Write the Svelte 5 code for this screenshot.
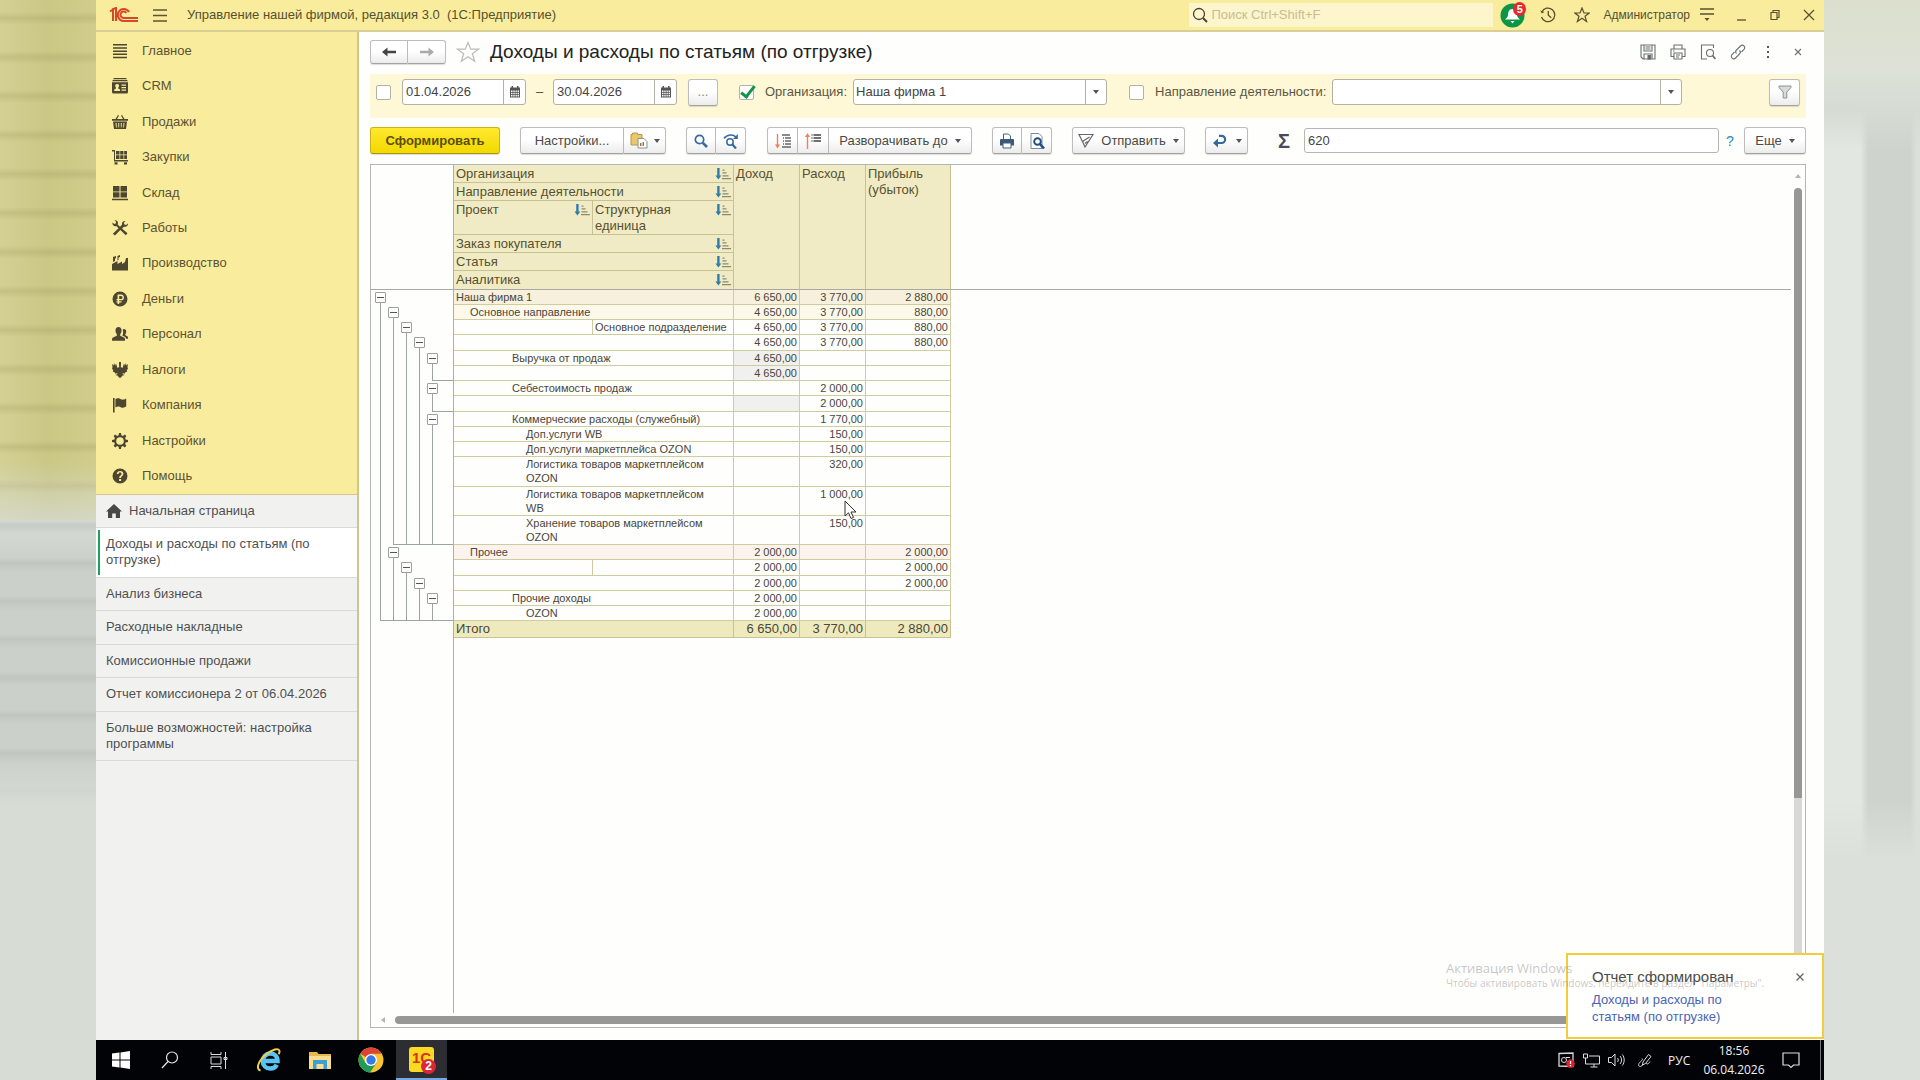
<script lang="ts">
  type Row = {
    name?: string;
    sub?: string;
    split?: boolean;
    level?: number;
    tree: string;
    end?: number;
    values: [string, string, string];
    tone?: string;
    muted?: boolean;
  };

  // Sidebar section icons, drawn on a 16x16 grid with even-odd fill
  const sections = [
    { title: 'Главное', d: 'M1 1h14v1.5H1zM1 4.2h14v1.5H1zM1 7.4h14v1.5H1zM1 10.6h14v1.5H1zM1 13.8h14v1.5H1z' },
    { title: 'CRM', d: 'M2 0h12l1 1.2H1zM1 2h14l1 1.2H0zM0 4.2h16V14a1.5 1.5 0 0 1-1.500 1.500h-13A1.500 1.500 0 0 1 0 14zM5 6a1.800 1.800 0 0 0-1.200 3.200L4 10.500l-1.800 1V13H8v-1.500l-1.800-1 .2-1.300A1.800 1.800 0 0 0 5 6zM9.500 6.500v1.200H14V6.500zM9.500 9v1.200H14V9zM9.500 11.500v1.200H14v-1.200z' },
    { title: 'Продажи', d: 'M3.500 5L6 1l1 .6L5 5h6L9 1.600 10 1l2.500 4H16v1.800H0V5zM1 7.600h14L14 15H2zM3.500 9l.5 4.500h.8L4.500 9zM6.200 9l.2 4.500h.8V9zM8.800 9v4.500h.8L9.800 9zM11.500 9l-.3 4.500h.8l.5-4.500z' },
    { title: 'Закупки', d: 'M0 1h3v10h13v1.500H2V2.500H0zM4 2h3.500v3.500H4zM8.200 2h3.300v3.500H8.200zM12.200 2H15v3.500h-2.800zM4 6.200h3.500V10H4zM8.200 6.200h3.300V10H8.200zM12.200 6.200H15V10h-2.800zM2.500 13.200h3V15.500h-3zM12 13.200h3V15.500h-3z' },
    { title: 'Склад', d: 'M1 1h6.500v5.500H1zM8.500 1H15v5.500H8.500zM1 7.300h6.500v5.200H1zM8.500 7.300H15v5.200H8.500zM0 13.800h16v1.500H0z' },
    { title: 'Работы', d: 'M.5 2.500L2.300 4 4 3.300 3.800 1.200 2.500.5C4 0 6 .8 6 3l-.3 1.500L8 6.700l2-2C9.700 2 11.500.5 13.500 1l-1.700 1.700.6 1.800 1.800.5L15.800 3.400C16.500 5.500 14.500 7.200 12 6.800L10 8.500l5.500 4.800-1.700 2L8.300 10 3 15.500.8 13.700 6.500 8.300 4.300 6C2 6.800 0 5 .5 2.500z' },
    { title: 'Производство', d: 'M0 15.500V9l5.500-3v3L10 6.500V9l3-2 1-4h2v12.500zM1 2l3-1v2.200l-1 .3V6L1 7zM5.500 1L8 0v2l-1.500.5V5l-1 .5z' },
    { title: 'Деньги', d: 'M8 .5a7.500 7.500 0 1 0 0 15 7.500 7.500 0 0 0 0-15zM5.500 3.500H9a2.800 2.800 0 0 1 0 5.800H7.200v.9h2.300v1.200H7.200V13H5.600v-1.600H4.500v-1.200h1.100v-.9H4.500V8h1.100zM7.200 4.900V8H9a1.500 1.500 0 0 0 0-3.100z' },
    { title: 'Персонал', d: 'M6.500 1C8.500 1 9.500 2.300 9.500 4.500c0 1.800-.6 2.800-1.300 3.600v1.700l3.800 1.700c.8.400 1 1 1 3.300H0c0-2.300.2-2.900 1-3.300l3.800-1.700V8.100C4.100 7.300 3.500 6.300 3.500 4.500 3.500 2.300 4.500 1 6.500 1zM11.800 3c1.600 0 2.400 1 2.400 2.700 0 1.200-.4 2-.9 2.500v1l2 1c.6.300.7.800.7 2.600h-2l-.6-1.700-3-1.400c.8-2 1-4 .3-6.300z' },
    { title: 'Налоги', d: 'M7 0h2v2.500L8.800 5l1.700 1L12 1.500l.8 2L14 1l.3 2.500L16 2l-.5 3L16 6.500l-1.200 1.700.4 1.300-1.700.7-1 1.500-2-.8.3 1 1.700 1.300-2 .3L9.500 15 8 16l-1.500-1-1-1.500-2-.3 1.700-1.300.3-1-2 .8-1-1.500-1.700-.7.4-1.300L0 6.500.5 5 0 2l1.700 1.500L2 1l1.200 2.500.8-2L5.500 6l1.700-1L7 2.500z' },
    { title: 'Компания', d: 'M1 1h1.600v14.500H1zM3.400 2C6 .5 7.500 1.500 9 2.300c1.700.9 3 .5 5.200-.7v8C12 11 10.500 11 8.800 10.200 7.300 9.400 6 9 3.400 10.500z' },
    { title: 'Настройки', d: 'M7 0h2l.4 2.300 1.500.6L12.800 1.500l1.600 1.600-1.300 1.900.6 1.500L16 7v2l-2.300.4-.6 1.500 1.300 1.900-1.600 1.600-1.900-1.300-1.500.6L9 16H7l-.4-2.300-1.500-.6-1.900 1.300-1.600-1.600 1.300-1.900-.6-1.500L0 9V7l2.300-.4.6-1.500L1.600 3.100l1.600-1.600 1.900 1.400 1.500-.6zM8 4.200a3.800 3.800 0 1 0 0 7.600 3.800 3.800 0 0 0 0-7.600z' },
    { title: 'Помощь', d: 'M8 .5a7.500 7.500 0 1 0 0 15 7.500 7.500 0 0 0 0-15zM4.800 6C4.800 4 6.200 3 8.100 3c2 0 3.300 1.100 3.300 2.800 0 2.200-2.400 2.300-2.400 4.200H7.200c0-2.500 2.300-2.700 2.300-4.100 0-.8-.6-1.300-1.400-1.300-.9 0-1.500.5-1.500 1.400zM7.100 11h2v2h-2z' },
  ];

  const tabs = [
    'Доходы и расходы по статьям (по отгрузке)',
    'Анализ бизнеса',
    'Расходные накладные',
    'Комиссионные продажи',
    'Отчет комиссионера 2 от 06.04.2026',
    'Больше возможностей: настройка программы',
  ];

  // tree: one character per outline level, "l" = running line, "b" = collapse button
  const rows: Row[] = [
    { name: 'Наша фирма 1', level: 0, tree: 'b', values: ['6 650,00', '3 770,00', '2 880,00'], tone: 'sand' },
    { name: 'Основное направление', level: 1, tree: 'lb', values: ['4 650,00', '3 770,00', '880,00'], tone: 'cream' },
    { split: true, sub: 'Основное подразделение', tree: 'llb', values: ['4 650,00', '3 770,00', '880,00'] },
    { tree: 'lllb', values: ['4 650,00', '3 770,00', '880,00'] },
    { name: 'Выручка от продаж', level: 2, tree: 'llllb', values: ['4 650,00', '', ''], muted: true },
    { tree: 'lllll', end: 5, values: ['4 650,00', '', ''], muted: true },
    { name: 'Себестоимость продаж', level: 2, tree: 'llllb', values: ['', '2 000,00', ''] },
    { tree: 'lllll', end: 5, values: ['', '2 000,00', ''], muted: true },
    { name: 'Коммерческие расходы (служебный)', level: 2, tree: 'llllb', values: ['', '1 770,00', ''] },
    { name: 'Доп.услуги WB', level: 3, tree: 'lllll', values: ['', '150,00', ''] },
    { name: 'Доп.услуги маркетплейса OZON', level: 3, tree: 'lllll', values: ['', '150,00', ''] },
    { name: 'Логистика товаров маркетплейсом OZON', level: 3, tree: 'lllll', values: ['', '320,00', ''], tone: 'tall' },
    { name: 'Логистика товаров маркетплейсом WB', level: 3, tree: 'lllll', values: ['', '1 000,00', ''], tone: 'tall' },
    { name: 'Хранение товаров маркетплейсом OZON', level: 3, tree: 'lllll', end: 2, values: ['', '150,00', ''], tone: 'tall' },
    { name: 'Прочее', level: 1, tree: 'lb', values: ['2 000,00', '', '2 000,00'], tone: 'rose' },
    { split: true, tree: 'llb', values: ['2 000,00', '', '2 000,00'] },
    { tree: 'lllb', values: ['2 000,00', '', '2 000,00'] },
    { name: 'Прочие доходы', level: 2, tree: 'llllb', values: ['2 000,00', '', ''] },
    { name: 'OZON', level: 3, tree: 'lllll', end: 1, values: ['2 000,00', '', ''] },
  ];

  let search = $state('');
  let dateFrom = $state('01.04.2026');
  let dateTo = $state('30.04.2026');
  let usePeriod = $state(false);
  let useOrg = $state(true);
  let useDirection = $state(false);
  let sum = $state('620');
</script>

{#snippet caret()}
  <svg class="caret" viewBox="0 0 6 4" aria-hidden="true"><path d="M0 0h6L3 4z" /></svg>
{/snippet}

{#snippet calendar()}
  <svg class="cal" viewBox="0 0 12 12" aria-hidden="true">
    <path fill-rule="evenodd" d="M1 1.500h1.500V0H4v1.500h4V0h1.500v1.500H11V11.500H1zM2 4.500v1.500h1.500V4.500zM4.300 4.500v1.500h1.400V4.500zM6.500 4.500v1.500h1.300V4.500zM8.600 4.500v1.500H10V4.500zM2 6.800v1.400h1.500V6.800zM4.300 6.800v1.400h1.400V6.800zM6.500 6.800v1.400h1.300V6.800zM8.600 6.800v1.400H10V6.800zM2 9v1.500h1.500V9zM4.300 9v1.500h1.400V9zM6.500 9v1.500h1.300V9zM8.600 9v1.500H10V9z" />
  </svg>
{/snippet}

{#snippet sort()}
  <svg class="sort" viewBox="0 0 16 12" aria-hidden="true">
    <path fill="#2f7dac" d="M2.200 0h2.400v7.500h1.700L3.400 11.500.5 7.500h1.700z" />
    <path fill="#8d8b6c" d="M7.500 1.500h2v1.200h-2zM7.500 4.300h4v1.200h-4zM7.500 7.200h6v1.200h-6zM7 10h9v1.200H7z" />
  </svg>
{/snippet}

<div class="screen">
  <div class="blur left"></div>

  <div class="desktop">
    <header class="titlebar">
      <svg class="logo" viewBox="0 0 30 16" aria-label="1C" role="img">
        <g fill="none" stroke="#d9472b" stroke-width="2">
          <path d="M1 4.500L4 2.500V14M3 2.500L7 1v13" />
          <path d="M20 5A6 6 0 1 0 14.500 14H29" />
          <path d="M17.300 6A3.200 3.200 0 1 0 14.500 11H29" />
        </g>
      </svg>
      <button class="plain burger" aria-label="Меню">
        <svg viewBox="0 0 14 13"><path d="M0 1h14M0 6.500h14M0 12h14" stroke="#5d5433" stroke-width="1.300" /></svg>
      </button>
      <span class="apptitle">Управление нашей фирмой, редакция 3.0&nbsp; (1С:Предприятие)</span>
      <label class="search">
        <svg viewBox="0 0 16 16" fill="none" stroke="#4a4330" stroke-width="1.300"><circle cx="7" cy="7" r="5.500" /><path d="M11 11l4 4" stroke-width="2" /></svg>
        <input type="text" placeholder="Поиск Ctrl+Shift+F" aria-label="Поиск" bind:value={search} />
      </label>
      <button class="plain bell" aria-label="Уведомления">
        <svg viewBox="0 0 26 26">
          <circle cx="12.500" cy="13.500" r="12" fill="#0c9547" />
          <path fill="#fff" d="M12.500 7c3.500 0 4.300 3 4.500 6 .1 2 1.500 3 3 4.500H5C6.500 16 7.900 15 8 13c.2-3 1-6 4.500-6zM10.500 19h4l-2 2.500z" />
        </svg>
        <span class="badge">5</span>
      </button>
      <button class="plain" aria-label="История">
        <svg viewBox="0 0 16 16" fill="none" stroke="#57502f" stroke-width="1.300"><path d="M1.800 5A6.800 6.800 0 1 1 1.500 10M8.300 4v4.300l3 2.500" /><path d="M.3 3.500l1.500 3L4.500 5z" fill="#57502f" stroke="none" /></svg>
      </button>
      <button class="plain star" aria-label="Избранное">
        <svg viewBox="0 0 16 16" fill="none" stroke="#57502f" stroke-width="1.200"><path d="M8 1l2 5h5.200L11 9.200l1.600 5.300L8 11.300l-4.600 3.200L5 9.200.8 6H6z" /></svg>
      </button>
      <button class="plain user">Администратор</button>
      <button class="plain" aria-label="Сервис">
        <svg viewBox="0 0 16 16"><path d="M1 2h14M1 7h14" stroke="#57502f" stroke-width="1.300" /><path d="M5.500 11h5L8 14z" fill="#57502f" /></svg>
      </button>
      <div class="winctl">
        <button class="plain" aria-label="Свернуть"><svg viewBox="0 0 16 16"><path d="M4 13h9" stroke="#57502f" stroke-width="1.300" /></svg></button>
        <button class="plain" aria-label="Восстановить"><svg viewBox="0 0 16 16" fill="none" stroke="#57502f" stroke-width="1.200"><path d="M4 5.500h6v7H4zM6 5.500v-2h6v7h-2" /></svg></button>
        <button class="plain" aria-label="Закрыть"><svg viewBox="0 0 16 16"><path d="M3 3l10 10M13 3L3 13" stroke="#57502f" stroke-width="1.200" /></svg></button>
      </div>
    </header>

    <div class="body">
      <aside class="sidebar">
        <nav class="sections">
          {#each sections as s}
            <a href="#section">
              <svg viewBox="0 0 16 16" aria-hidden="true"><path fill-rule="evenodd" d={s.d} /></svg>
              {s.title}
            </a>
          {/each}
        </nav>
        <nav class="tabs">
          <a class="home" href="#home">
            <svg viewBox="0 0 16 14" aria-hidden="true"><path d="M8 0l8 7.500h-2V14H9.800V9.500H6.200V14H2V7.500H0z" /></svg>
            Начальная страница
          </a>
          {#each tabs as t, i}
            <a href="#tab" class:active={i === 0}>{t}</a>
          {/each}
        </nav>
      </aside>

      <main>
        <div class="heading">
          <div class="group nav">
            <button aria-label="Назад"><svg viewBox="0 0 14 10"><path fill="#444" d="M0 5l5.500-4.500v3.300H14v2.400H5.500v3.300z" /></svg></button>
            <button aria-label="Вперед"><svg viewBox="0 0 14 10"><path fill="#aaa" d="M14 5L8.500.5v3.300H0v2.400h8.500v3.300z" /></svg></button>
          </div>
          <button class="plain fav" aria-label="В избранное">
            <svg viewBox="0 0 24 22" fill="none" stroke="#b9bcbd" stroke-width="1.200"><path d="M12 1.500l2.800 6.700h7.700l-6.200 4.600 2.400 7.400L12 15.700l-6.700 4.500 2.400-7.400L1.500 8.200h7.700z" /></svg>
          </button>
          <h1>Доходы и расходы по статьям (по отгрузке)</h1>
          <div class="tools">
            <button class="plain" aria-label="Сохранить"><svg viewBox="0 0 16 16"><path d="M1 1h14v14H3l-2-2zM4 1v6h8V1M5.500 3h5M5.500 5h5M4 15v-5h8v5" /><path d="M8 11.500h2.500V15H8z" fill="#666" /></svg></button>
            <button class="plain" aria-label="Печать"><svg viewBox="0 0 16 16"><path d="M4 5V1h8v4M3.500 12.500H1V5h14v7.500h-2.500M4 9h8v6H4zM6 11h4M6 13h3M3 7h1.500" /></svg></button>
            <button class="plain" aria-label="Просмотр"><svg viewBox="0 0 16 16"><path d="M13.500 4V1h-12v14H7" /><circle cx="10" cy="9" r="3.500" /><path d="M12.500 11.500L15.500 15" stroke-width="1.800" /></svg></button>
            <button class="plain" aria-label="Ссылка"><svg viewBox="0 0 16 16"><path d="M6.500 9.500c-1-1-1-2.500 0-3.500L10.500 2c2.500-2.200 5.500 1 3.500 3.500L11.500 8M9.500 6.500c1 1 1 2.500 0 3.500L5.500 14C3 16.200 0 13 2 10.500L4.500 8" /></svg></button>
            <button class="plain" aria-label="Еще действия"><svg viewBox="0 0 16 16"><path d="M7 2h2v2H7zM7 7h2v2H7zM7 12h2v2H7z" fill="#555" stroke="none" /></svg></button>
            <button class="plain" aria-label="Закрыть отчет"><svg viewBox="0 0 16 16"><path d="M5 5l6 6M11 5l-6 6" /></svg></button>
          </div>
        </div>

        <div class="filter">
          <input type="checkbox" aria-label="Период" bind:checked={usePeriod} />
          <div class="field date first">
            <input type="text" aria-label="Начало периода" bind:value={dateFrom} />
            <button aria-label="Выбрать дату начала">{@render calendar()}</button>
          </div>
          <span class="dash">–</span>
          <div class="field date">
            <input type="text" aria-label="Конец периода" bind:value={dateTo} />
            <button aria-label="Выбрать дату окончания">{@render calendar()}</button>
          </div>
          <button class="btn dots" aria-label="Выбрать период">...</button>
          <input id="use-org" type="checkbox" aria-label="Отбор по организации" bind:checked={useOrg} />
          <label for="org">Организация:</label>
          <div class="field org">
            <select id="org"><option>Наша фирма 1</option></select>
            <span class="drop">{@render caret()}</span>
          </div>
          <input id="use-dir" type="checkbox" aria-label="Отбор по направлению" bind:checked={useDirection} />
          <label for="direction">Направление деятельности:</label>
          <div class="field direction">
            <select id="direction"><option></option></select>
            <span class="drop">{@render caret()}</span>
          </div>
          <button class="btn funnel" aria-label="Отбор">
            <svg viewBox="0 0 14 14"><path fill="#d8dadb" stroke="#8c9092" d="M1 1h12v1.500L8.800 7v6H5.200V7L1 2.500z" /></svg>
          </button>
        </div>

        <div class="toolbar">
          <button class="btn primary">Сформировать</button>
          <div class="group settings">
            <button>Настройки...</button>
            <button class="variant" aria-label="Варианты отчета">
              <svg viewBox="0 0 18 17">
                <path fill="#e9c76b" stroke="#b9974a" d="M1 2.500h1.500V1h5v1.500H12V13H1z" />
                <path fill="#fff" stroke="#8b9196" d="M8 6.500h6l3 3V16H8z" />
                <path fill="#d05a4e" d="M10 11h1.500v3H10z" /><path fill="#4f9b5d" d="M12.500 10H14v4h-1.500z" />
              </svg>
              {@render caret()}
            </button>
          </div>
          <div class="group find">
            <button aria-label="Найти"><svg viewBox="0 0 16 16" fill="none" stroke="#35699c"><circle cx="6.500" cy="6.500" r="4.200" stroke-width="1.700" /><path d="M9.800 9.800L14 14" stroke-width="2.600" /></svg></button>
            <button aria-label="Найти далее"><svg viewBox="0 0 16 16" fill="none" stroke="#35699c"><circle cx="7" cy="9" r="3.200" stroke-width="1.500" /><path d="M9.500 11.500l3.500 4" stroke-width="2.200" /><path d="M1 5.500C4 1 10 1 13 4" stroke-width="1.500" /><path d="M14.800 1v5H10z" fill="#35699c" stroke="none" /></svg></button>
          </div>
          <div class="group expand">
            <button aria-label="Развернуть"><svg viewBox="0 0 18 16"><path d="M3.500 1v12" stroke="#ef7f5d" stroke-width="1.400" /><path d="M1 11.500h5l-2.500 4z" fill="#ef7f5d" /><path d="M8 2h8M11 5h6M11 8h6M11 11h6M8 14h9M9 5h1M9 8h1M9 11h1" stroke="#666" stroke-width="1.300" /></svg></button>
            <button aria-label="Свернуть группы"><svg viewBox="0 0 18 16"><path d="M3.500 3v13" stroke="#ef7f5d" stroke-width="1.400" /><path d="M1 4h5L3.500 0z" fill="#ef7f5d" /><path d="M9.500 2H17M9.500 5H17M9.500 8H17M7.500 2h1M7.500 5h1M7.500 8h1" stroke="#444" stroke-width="1.300" /></svg></button>
            <button class="wide">Разворачивать до {@render caret()}</button>
          </div>
          <div class="group print">
            <button aria-label="Печать отчета"><svg viewBox="0 0 16 16"><path fill="#fff" stroke="#44617d" d="M4.500 6V1h5l2 2v3" /><path fill="#3a5a7a" d="M2 6h12a1 1 0 0 1 1 1v5.500H1V7a1 1 0 0 1 1-1z" /><path fill="#fff" stroke="#44617d" d="M4 10h8v5H4z" /></svg></button>
            <button aria-label="Предварительный просмотр"><svg viewBox="0 0 16 16"><path fill="#fff" stroke="#7d8b98" d="M2 .5h8l3 3v12H2z" /><circle cx="8.500" cy="8.500" r="3.300" fill="#fff" stroke="#1f4f80" stroke-width="1.900" /><path d="M11 11l4 4.500" stroke="#1f4f80" stroke-width="2.500" /></svg></button>
          </div>
          <button class="btn send">
            <svg viewBox="0 0 16 15" fill="none" stroke="#666" stroke-width="1.200"><path d="M1 1.500h14L7 14 4.500 8.500zM4.500 8.500L11.500 4M7 10.500l2.500-2" /></svg>
            Отправить {@render caret()}
          </button>
          <button class="btn undo" aria-label="История изменений">
            <svg viewBox="0 0 16 14"><path fill="none" stroke="#35699c" stroke-width="2.200" d="M7 1.800h2.500a3.600 3.600 0 0 1 0 7.200H5" /><path fill="#35699c" d="M1 9l5-4.500v9z" /></svg>
            {@render caret()}
          </button>
          <label class="sigma" for="sum">Σ</label>
          <input id="sum" class="sum" type="text" bind:value={sum} />
          <a class="help" href="#help">?</a>
          <button class="btn more">Еще {@render caret()}</button>
        </div>

        <section class="report">
          <div class="sheet">
            <table>
              <colgroup>
                <col class="c-tree" /><col class="c-a" /><col class="c-b" /><col class="c-n" /><col class="c-n" /><col class="c-p" /><col />
              </colgroup>
              <thead>
                <tr>
                  <th class="gutter" rowspan="6"></th>
                  <th colspan="2"><div>Организация {@render sort()}</div></th>
                  <th rowspan="6">Доход</th>
                  <th rowspan="6">Расход</th>
                  <th rowspan="6">Прибыль (убыток)</th>
                  <th class="rest" rowspan="6"></th>
                </tr>
                <tr><th colspan="2"><div>Направление деятельности {@render sort()}</div></th></tr>
                <tr class="two">
                  <th><div>Проект {@render sort()}</div></th>
                  <th><div>Структурная единица {@render sort()}</div></th>
                </tr>
                <tr><th colspan="2"><div>Заказ покупателя {@render sort()}</div></th></tr>
                <tr><th colspan="2"><div>Статья {@render sort()}</div></th></tr>
                <tr><th colspan="2"><div>Аналитика {@render sort()}</div></th></tr>
              </thead>
              <tbody>
                {#each rows as r}
                  <tr class={r.tone ?? ''}>
                    <td class="gutter">
                      <div class="tree">
                        {#each r.tree.split('') as c, i}
                          <span class="slot" class:corner={r.end === i + 1} class:under={r.end !== undefined && i + 1 > r.end}>
                            {#if c === 'b'}<button class="fold" aria-label="Свернуть группу"></button>{/if}
                            <i></i>
                          </span>
                        {/each}
                        {#if r.end}<span class="tail"></span>{/if}
                      </div>
                    </td>
                    {#if r.split}
                      <td></td>
                      <td>{r.sub ?? ''}</td>
                    {:else}
                      <td colspan="2" class="lv{r.level ?? 0}">{r.name ?? ''}</td>
                    {/if}
                    {#each r.values as v, i}
                      <td class="num" class:muted={r.muted && i === 0}>{v}</td>
                    {/each}
                  </tr>
                {/each}
              </tbody>
              <tfoot>
                <tr>
                  <td class="gutter"></td>
                  <td colspan="2">Итого</td>
                  <td class="num">6 650,00</td>
                  <td class="num">3 770,00</td>
                  <td class="num">2 880,00</td>
                </tr>
              </tfoot>
            </table>
          </div>
          <div class="vscroll"><svg viewBox="0 0 6 4"><path d="M0 4h6L3 0z" /></svg><span class="thumb"></span><span class="track"></span></div>
          <div class="hscroll"><svg viewBox="0 0 4 6"><path d="M4 0v6L0 3z" /></svg><span class="thumb"></span></div>
        </section>
      </main>
    </div>

    <footer class="taskbar">
      <button class="task" aria-label="Пуск"><svg width="18" height="18" viewBox="0 0 18 18"><path fill="#fff" d="M0 2.500l7.500-1v7H0zM8.500 1.400L18 0v8.500H8.500zM0 9.500h7.500v7l-7.500-1zM8.500 9.500H18V18l-9.500-1.400z" /></svg></button>
      <button class="task" aria-label="Поиск в Windows"><svg width="18" height="18" viewBox="0 0 18 18" fill="none" stroke="#e8e8e8" stroke-width="1.200"><circle cx="11" cy="6.500" r="5.500" /><path d="M7 10.500L1 17" /></svg></button>
      <button class="task" aria-label="Представление задач"><svg width="18" height="17" viewBox="0 0 18 17" fill="none" stroke="#ddd"><path d="M1 0v2.500h10V0M1 5h10v7H1zM1 17v-2.500h10V17M15.500 0v17M14 5.500h3v2h-3z" /></svg></button>
      <button class="task app" aria-label="Internet Explorer"><svg width="26" height="24" viewBox="0 0 26 24" fill="none"><path stroke="#58c4f3" stroke-width="4.500" d="M7 13h14.500C21.500 8 18 5.500 14.200 5.500 10 5.500 6.800 9 6.800 13.200c0 4.200 3.200 7.300 7.400 7.300 3 0 5.300-1.200 6.600-3.800" /><path stroke="#f3cf4b" stroke-width="2" d="M4.500 22.500C-1 21 3 12 10 6.500 16 1.500 23-.5 23.500 3c.2 1-.3 2.300-.9 3.300" /></svg></button>
      <button class="task app" aria-label="Проводник"><svg width="22" height="19" viewBox="0 0 22 19"><path fill="#e5b94d" d="M0 1h8l1.500 2H22v15H0z" /><path fill="#f9de8f" d="M0 5h22v13H0z" /><path fill="#3f9fd0" d="M4 9h14v9h-3.500v-5h-7v5H4z" /></svg></button>
      <button class="task app" aria-label="Chrome"><svg width="26" height="26" viewBox="0 0 26 26"><circle cx="13" cy="13" r="12.500" fill="#f8c32f" /><path fill="#db4437" d="M13 13L2.200 6.800A12.500 12.500 0 0 1 23.800 6.800H13z" /><path fill="#1f9d58" d="M2.200 6.800A12.500 12.500 0 0 0 12 25.500L18.500 16 13 13 7.500 16z" /><circle cx="13" cy="13" r="6" fill="#fff" /><circle cx="13" cy="13" r="4.700" fill="#3a78e8" /></svg></button>
      <button class="task app current" aria-label="1С:Предприятие"><span class="tile">1С<span class="count">2</span></span></button>
      <div class="tray">
        <svg width="17" height="16" viewBox="0 0 17 16"><path fill="none" stroke="#d8d8d8" stroke-width="1.300" d="M1 1.500L15 1v13.500L1 14z" /><circle cx="6" cy="8" r="2.500" fill="none" stroke="#ddd" /><path stroke="#ddd" d="M8 5.500h4" /><circle cx="12.500" cy="11.500" r="4.300" fill="#d9232e" /><path stroke="#fff" stroke-width="1.300" d="M12.500 9v3M12.500 13v1.200" /></svg>
        <svg width="17" height="15" viewBox="0 0 17 15" fill="none" stroke="#ddd"><path d="M6 3h10.500v8H6.500M11 11v3M7.500 14h7M.5 1h4v4h-4zM2.500 5v6h4" /></svg>
        <svg width="17" height="14" viewBox="0 0 17 14" fill="none" stroke="#ddd"><path d="M.5 4.500h3L7 1v12L3.500 9.500h-3zM9.500 5c1 1.200 1 2.800 0 4M12 3c2 2.300 2 5.700 0 8M14.300 1.500c2.500 3 2.500 8 0 11" /></svg>
        <svg class="pen" width="15" height="15" viewBox="0 0 15 15" fill="none" stroke="#ddd"><path d="M14 3.500L11.500 1.500 6 9l-.5 3L8.500 10.500 14 3.500M5.500 12c-2 3-5 1-3.500-1.500C3.500 8 6.500 7 5 5.500M9 10c1 2 3 .5 4-1.500" /></svg>
        <span class="lang">РУС</span>
        <time>18:56<br />06.04.2026</time>
        <svg width="18" height="17" viewBox="0 0 18 17" fill="none" stroke="#ddd" stroke-width="1.200"><path d="M1 1h16v12h-5.500L9 15.500 6.500 13H1z" /></svg>
        <span class="edge"></span>
      </div>
    </footer>

    <div class="toast" role="status">
      <div class="toast-head"><strong>Отчет сформирован</strong>
        <button class="plain" aria-label="Закрыть уведомление"><svg viewBox="0 0 16 16"><path d="M4.500 4.500l7 7M11.500 4.500l-7 7" stroke="#666" stroke-width="1.300" /></svg></button>
      </div>
      <a href="#report">Доходы и расходы по статьям (по отгрузке)</a>
    </div>
    <div class="watermark"><b>Активация Windows</b>Чтобы активировать Windows, перейдите в раздел "Параметры".</div>
    <svg class="cursor" viewBox="0 0 14 20" aria-hidden="true"><path fill="#fff" stroke="#333" d="M1 1v15l3.500-3.200L7 18.500l2.500-1.100L7 12h5z" /></svg>
  </div>

  <div class="blur right"></div>
</div>

<style>
  :global(body) { margin: 0; background: #d8ddd6; }
  .screen {
    display: grid;
    grid-template-columns: 5% minmax(0, 1fr) 5%;
    height: 100vh;
    overflow: hidden;
    font: 13px/16px 'Liberation Sans', Arial, sans-serif;
    color: #4c4a42;
  }
  .screen :where(button, input, select) { font: inherit; color: inherit; margin: 0; box-sizing: border-box; }
  .screen a { color: inherit; text-decoration: none; }
  .screen svg { display: block; flex: none; }

  .blur.left {
    background:
      linear-gradient(to bottom, #d3cf9200 0, #d3cf9200 460px, #d6dbd4 540px),
      repeating-linear-gradient(to bottom, #8c8c5000 0, #8c8c5000 12px, #8c8c5038 18px, #8c8c5000 25px, #8c8c5000 39px),
      linear-gradient(to right, #d4d093, #cbc785 50%, #d0cc8b);
    position: relative;
  }
  .blur.left::after {
    content: '';
    position: absolute;
    inset: 520px 0 0;
    background:
      linear-gradient(to bottom, #d7dcd500 0, #d7dcd500 240px, #d7dcd5 285px),
      repeating-linear-gradient(to bottom, #aab0aa00 0, #aab0aa55 5px, #aab0aa00 14px, #aab0aa00 38px),
      linear-gradient(to bottom, #d6dbd4, #cbd0cb 40px);
  }
  .blur.right {
    background:
      linear-gradient(to bottom, #dcdfcc 0, #dde2d8 70px, #d6dbd4 110px, #e1e6e000 150px),
      linear-gradient(to bottom, #e1e6e000 0, #e1e6e000 800px, #dbe0da 860px),
      linear-gradient(to right, #e2e7e1 38%, #ced3cd 46%, #ced3cd 90%, #dce0da 96%);
  }

  .desktop { position: relative; display: flex; flex-direction: column; background: #fefefd; min-width: 0; }
  .plain { background: none; border: 0; padding: 0; display: block; }
  .plain > svg { width: 16px; height: 16px; }

  .titlebar {
    display: flex;
    align-items: center;
    height: 32px;
    box-sizing: border-box;
    border-bottom: 2px solid #d9cf94;
    background: #f9ec9c;
    padding: 0 7px 0 13px;
    color: #57502f;
  }
  .logo { width: 30px; height: 16px; }
  .burger { margin: 0 20px 0 14px; }
  .burger > svg { width: 14px; height: 13px; }
  .apptitle { flex: 1; white-space: nowrap; }
  .search {
    display: flex;
    align-items: center;
    width: 304px;
    height: 24px;
    background: #fdf5cb;
    margin-right: 7px;
  }
  .search svg { width: 16px; height: 16px; margin-left: 3px; }
  .search input { border: 0; background: none; flex: 1; outline: 0; padding: 0 3px; }
  .search input::placeholder { color: #c5bd94; opacity: 1; }
  .bell { position: relative; margin-right: 14px; }
  .bell > svg { width: 26px; height: 26px; }
  .badge {
    position: absolute;
    top: 0;
    right: 0;
    width: 13px;
    height: 14px;
    border-radius: 50%;
    background: #e5282c;
    color: #fff;
    font: bold 11px/14px 'Liberation Sans', sans-serif;
    text-align: center;
  }
  .star { margin-left: 18px; }
  .user { margin: 0 9px 0 13px; font-size: 12px; }
  .winctl { display: flex; gap: 18px; margin-left: 18px; }

  .body { flex: 1; display: flex; min-height: 0; }
  .sidebar {
    width: 263px;
    box-sizing: border-box;
    flex: none;
    background: #f1f2f0;
    border-right: 2px solid #cfc491;
  }
  .sections {
    display: grid;
    grid-auto-rows: 1fr;
    min-height: 463px;
    padding-top: 1px;
    background: #f9ec9c;
    border-bottom: 1px solid #d5c985;
    box-sizing: border-box;
  }
  .sections a { display: flex; align-items: center; gap: 14px; padding-left: 16px; color: #5c5233; }
  .sections svg { width: 16px; height: 16px; fill: #4d4732; }
  .tabs { line-height: 16px; }
  .tabs a { display: block; padding: 8px 24px 8px 10px; border-bottom: 1px solid #d9dad8; color: #505050; }
  .tabs .home { display: flex; align-items: center; gap: 7px; padding: 8px 10px; }
  .tabs .home svg { width: 16px; height: 14px; fill: #484848; }
  .tabs a:nth-child(even) { padding-bottom: 9px; }
  .tabs .active { background: linear-gradient(#19a35b, #19a35b) 2px 2px / 2px calc(100% - 4px) no-repeat #fff; }

  main { flex: 1; min-width: 0; display: flex; flex-direction: column; padding: 0 18px 12px 11px; }
  .heading { display: flex; align-items: center; height: 40px; margin-bottom: 2px; }
  .group { display: flex; }
  .group > button, .btn {
    display: flex;
    align-items: center;
    justify-content: center;
    border: 1px solid #bdbdbd;
    border-bottom-color: #a2a2a2;
    background: linear-gradient(#fff 45%, #ececec);
    box-shadow: 0 1px 1px #0002;
    border-radius: 3px;
    padding: 0;
    height: 27px;
    white-space: nowrap;
  }
  .group > button + button { border-left: 0; }
  .group > button:not(:last-child) { border-top-right-radius: 0; border-bottom-right-radius: 0; }
  .group > button:not(:first-child) { border-top-left-radius: 0; border-bottom-left-radius: 0; }
  .caret { width: 6px; height: 4px; fill: #555; }

  .nav > button { width: 38px; height: 24px; }
  .nav svg { width: 14px; height: 10px; }
  .fav { margin: 0 10px; }
  .fav > svg { width: 24px; height: 22px; }
  h1 { flex: 1; margin: 0; font: 19px/24px 'Liberation Sans', Arial, sans-serif; color: #222; white-space: nowrap; }
  .tools { display: flex; gap: 14px; }
  .tools svg { fill: none; stroke: #6c7072; stroke-width: 1.1; }

  .filter {
    display: flex;
    align-items: center;
    height: 44px;
    box-sizing: border-box;
    padding: 0 6px 8px;
    background: #fff8d7;
  }
  .filter label { white-space: nowrap; margin-right: 6px; color: #5b573f; }
  input[type='checkbox'] {
    appearance: none;
    flex: none;
    width: 15px;
    height: 15px;
    margin-right: 11px;
    border: 1px solid #b3b1a2;
    border-radius: 2px;
    background: #fff;
    position: relative;
  }
  input[type='checkbox']:checked::after {
    content: '';
    position: absolute;
    left: 4px;
    top: -3px;
    width: 5px;
    height: 12px;
    border: solid #12934a;
    border-width: 0 3px 3px 0;
    transform: rotate(38deg);
  }
  .field {
    display: flex;
    box-sizing: border-box;
    height: 26px;
    border: 1px solid #b3b1a2;
    border-radius: 3px;
    background: #fff;
    color: #444;
  }
  .field input, .field select {
    appearance: none;
    flex: 1;
    min-width: 0;
    border: 0;
    background: none;
    padding: 0 3px;
    outline: 0;
  }
  .field select { padding: 0 2px; }
  .date { width: 124px; }
  .date button { width: 22px; border: 0; border-left: 1px solid #b3b1a2; background: none; padding: 0; display: grid; place-items: center; }
  .cal { width: 12px; height: 12px; fill: #555; }
  .dash { width: 27px; text-align: center; }
  .dots { width: 30px; margin: 0 21px 0 11px; color: #888; }
  .org { width: 254px; margin-right: 22px; }
  .direction { flex: 1; margin-right: 87px; }
  .drop { width: 20px; border-left: 1px solid #b3b1a2; display: grid; place-items: center; pointer-events: none; }
  .funnel { width: 31px; }
  .funnel svg { width: 14px; height: 14px; }

  .toolbar { display: flex; align-items: center; margin: 9px 0 10px; height: 27px; }
  .primary {
    width: 130px;
    font-weight: bold;
    color: #5b4e0d;
    background: linear-gradient(#ffe92e, #f2d900);
    border-color: #cbb21a;
    border-bottom-color: #a89312;
  }
  .settings { margin-left: 20px; }
  .settings > button { width: 104px; }
  .settings > .variant { width: 42px; gap: 6px; }
  .variant svg:first-child { width: 18px; height: 17px; }
  .find { margin-left: 20px; }
  .find > button, .print > button { width: 30px; }
  .find svg, .print svg { width: 16px; height: 16px; }
  .expand { margin-left: 21px; }
  .expand > button { width: 31px; }
  .expand > button svg:not(.caret) { width: 18px; height: 16px; }
  .expand > .wide { width: 143px; gap: 7px; }
  .print { margin-left: 20px; }
  .send { width: 113px; gap: 7px; margin-left: 20px; }
  .send svg:first-child { width: 16px; height: 15px; }
  .undo { width: 43px; gap: 8px; margin-left: 20px; }
  .undo svg:first-child { width: 16px; height: 14px; }
  .sigma { width: 56px; box-sizing: border-box; padding-left: 16px; text-align: center; font: bold 20px/24px 'Liberation Sans', sans-serif; color: #4a4a55; }
  .sum { flex: 1; min-width: 0; height: 25px; border: 1px solid #b5b5b5; border-radius: 3px; background: #fff; padding: 0 3px; color: #444; }
  .toolbar .help { width: 22px; padding-right: 3px; text-align: center; color: #2b8cc4; font-size: 14px; }
  .more { width: 62px; gap: 7px; }

  .report {
    flex: 1;
    min-height: 0;
    display: grid;
    grid-template-columns: minmax(0, 1fr) 14px;
    grid-template-rows: minmax(0, 1fr) 14px;
    border: 1px solid #b4b6b5;
  }
  .sheet { overflow: hidden; background: linear-gradient(#aab0ae, #aab0ae) 82px 0 / 1px 100% no-repeat; }
  table { table-layout: fixed; width: 100%; border-spacing: 0; font-size: 11px; line-height: 14px; color: #4a463a; }
  .c-tree { width: 83px; }
  .c-a { width: 139px; }
  .c-b { width: 141px; }
  .c-n { width: 66px; }
  .c-p { width: 85px; }
  th, td { box-sizing: border-box; padding: 0 2px; vertical-align: top; text-align: left; border: solid #cfcd9f; border-width: 0 1px 1px 0; }
  th { height: 18px; font: 13px/16px 'Liberation Sans', Arial, sans-serif; background: #f0ebc4; color: #57512f; border-color: #c6c391; padding: 1px 2px 0; }
  th > div { display: flex; justify-content: space-between; }
  .two th { height: 34px; }
  thead tr:last-child th { height: 19px; }
  thead tr:first-child th[rowspan], thead tr:last-child th { border-bottom-color: #a6aaa2; }
  .sort { width: 16px; height: 12px; margin-top: 2px; }
  th.gutter, td.gutter { background: none; padding: 0; border-width: 0 1px 0 0; border-color: #aab0ae; }
  th.gutter { border-bottom-width: 1px; }
  th.rest { background: none; border-right: 0; }

  tbody tr { --h: 15px; }
  tbody tr:nth-child(4n) { --h: 16px; }
  tbody .tall { --h: 29px; }
  tbody .tall:nth-child(4n) { --h: 30px; }
  tbody td { height: var(--h); }
  .lv1 { padding-left: 16px; }
  .lv2 { padding-left: 58px; }
  .lv3 { padding-left: 72px; padding-right: 16px; }
  .num { text-align: right; }
  .muted { background: #f0f0ef; }
  .sand td:not(.gutter) { background: #f7f0dc; }
  .cream td:not(.gutter) { background: #fcf8ea; }
  .rose td:not(.gutter) { background: #fcf3ee; }
  tfoot td { height: 17px; font-size: 13px; line-height: 16px; background: #eeeabd; border-color: #c6c391; }

  .tree { display: flex; height: var(--h); padding-left: 3px; }
  .slot { width: 13px; display: flex; flex-direction: column; align-items: center; }
  .slot i { flex: 1; width: 1px; background: #9da3a1; }
  .under { border-bottom: 1px solid #9da3a1; box-sizing: border-box; }
  .corner { background: linear-gradient(#9da3a1, #9da3a1) 6px 100% / 7px 1px no-repeat; }
  .tail { flex: 1; border-bottom: 1px solid #9da3a1; }
  .fold {
    width: 11px;
    height: 11px;
    flex: none;
    margin: 2px 0 0;
    padding: 0;
    border: 1px solid #9a9f9d;
    border-radius: 1px;
    background: linear-gradient(#555, #555) center / 7px 1px no-repeat #fff;
  }

  .vscroll { display: flex; flex-direction: column; align-items: center; }
  .vscroll svg { width: 6px; height: 4px; margin: 9px 0 10px; fill: #b5b5b5; }
  .vscroll .thumb { flex: 612; width: 8px; border-radius: 4px 4px 0 0; background: #979896; }
  .vscroll .track { flex: 216; width: 8px; background: #d8d9d7; }
  .hscroll { display: flex; align-items: center; }
  .hscroll svg { width: 4px; height: 6px; margin: 0 10px; fill: #b5b5b5; }
  .hscroll .thumb { flex: 1; height: 8px; border-radius: 4px; background: #979896; }

  .taskbar { display: flex; height: 40px; background: #020306; color: #f0f0f0; font: 12px/19px 'Open Sans', 'Noto Sans', sans-serif; }
  .task { width: 49px; border: 0; padding: 0; background: none; display: grid; place-items: center; }
  .task.app { width: 51px; }
  .task.current { background: #2c2e33; border-bottom: 2px solid #76a9e3; }
  .tile {
    position: relative;
    width: 25px;
    height: 25px;
    border-radius: 3px;
    background: #fcd922;
    color: #d8331d;
    font: bold 15px/22px 'Liberation Sans', sans-serif;
  }
  .count {
    position: absolute;
    right: -2px;
    bottom: -2px;
    width: 15px;
    height: 15px;
    border-radius: 50%;
    background: #dc2636;
    color: #fff;
    font-size: 12px;
    line-height: 15px;
  }
  .tray { margin-left: auto; display: flex; align-items: center; gap: 8px; }
  .tray .pen { margin: 0 8px 0 4px; }
  .lang { width: 23px; }
  time { width: 66px; text-align: center; margin: 0 7px 0 2px; }
  .edge { width: 4px; height: 100%; margin-left: 12px; border-left: 1px solid #777; box-sizing: border-box; }

  .toast {
    position: absolute;
    right: 0;
    bottom: 41px;
    width: 258px;
    height: 86px;
    box-sizing: border-box;
    border: 2px solid #f1cc3c;
    background: #fffffd;
    padding: 12px 14px 0 24px;
    line-height: 17px;
  }
  .toast-head { display: flex; justify-content: space-between; align-items: center; height: 20px; margin-bottom: 4px; }
  .toast strong { font: 15px/20px 'Liberation Sans', Arial, sans-serif; color: #4a4a4a; }
  .toast a { display: block; width: 150px; color: #4a64b4; }
  .watermark {
    position: absolute;
    right: 71px;
    bottom: 91px;
    width: 307px;
    white-space: nowrap;
    pointer-events: none;
    font: 10px/12px 'Open Sans', 'Noto Sans', sans-serif;
    color: #8887;
  }
  .watermark b { display: block; font: 13px/18px 'Open Sans', 'Noto Sans', sans-serif; }
  .cursor { position: absolute; left: 748px; top: 500px; width: 14px; height: 20px; }
</style>
